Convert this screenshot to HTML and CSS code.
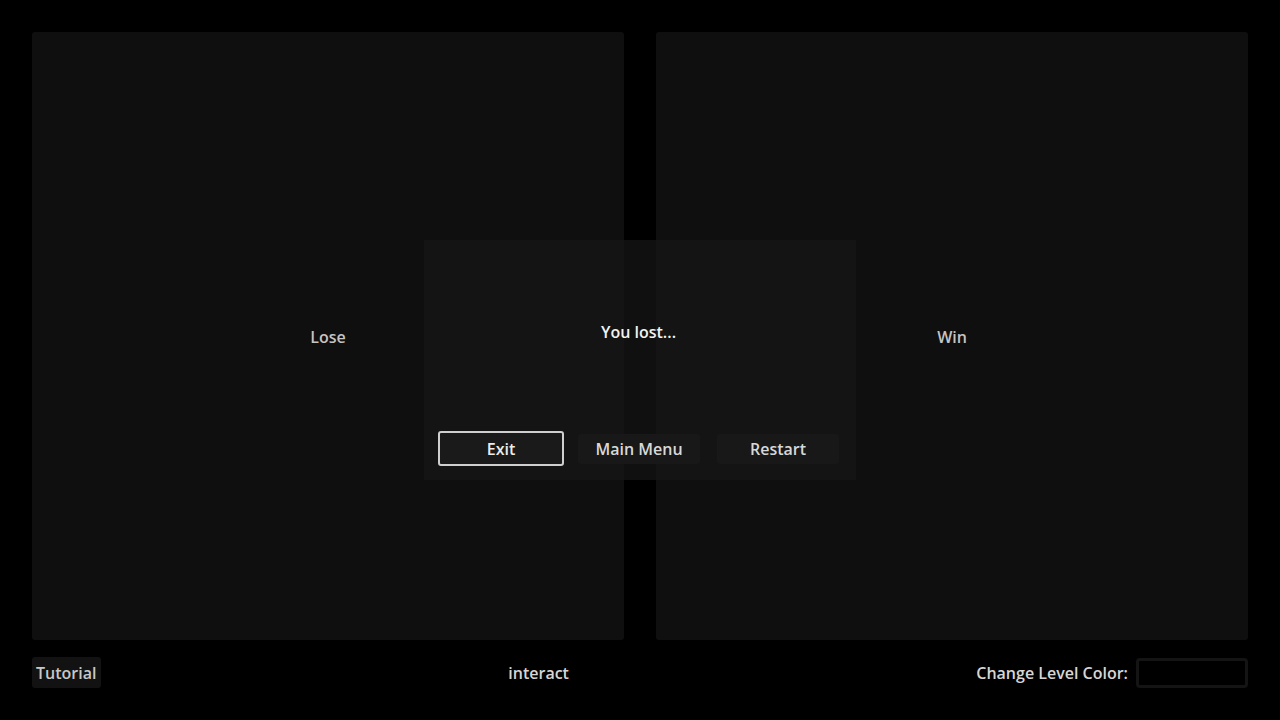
FILE: index.html
```html
<!DOCTYPE html>
<html>
<head>
<meta charset="utf-8">
<link rel="stylesheet" href="styles.css">
</head>
<body>
<div class="screen">
  <div class="panels">
    <div class="panel"><span class="panel-label">Lose</span></div>
    <div class="panel"><span class="panel-label">Win</span></div>
  </div>
  <div class="bottom">
    <div class="tutorial">Tutorial</div>
    <div class="interact">interact</div>
    <div class="color-row">
      <span class="color-label">Change Level Color:</span>
      <div class="color-btn"></div>
    </div>
  </div>
  <div class="dialog">
    <div class="dialog-msg">You lost...</div>
    <div class="dialog-btns">
      <div class="btn btn-focus">Exit</div>
      <div class="btn">Main Menu</div>
      <div class="btn">Restart</div>
    </div>
  </div>
</div>
</body>
</html>
```
FILE: styles.css
```css
html, body {
  margin: 0;
  padding: 0;
  background: #000;
  width: 1280px;
  height: 720px;
  overflow: hidden;
  font-family: "Open Sans", "Noto Sans", sans-serif;
  font-size: 16px;
  font-weight: 600;
}
.screen {
  position: relative;
  width: 1280px;
  height: 720px;
  box-sizing: border-box;
  padding: 32px 32px 0;
  display: flex;
  flex-direction: column;
}
.panels {
  display: flex;
  gap: 32px;
  height: 608px;
}
.panel {
  flex: 1;
  background: #0f0f0f;
  border-radius: 3px;
  display: flex;
  align-items: center;
  justify-content: center;
  padding-top: 2px;
  box-sizing: border-box;
}
.panel-label {
  color: #c4c4c4;
  line-height: 22px;
}
.bottom {
  margin-top: 17px;
  height: 31px;
  display: flex;
  align-items: center;
  justify-content: space-between;
  color: #d6d6d6;
}
.tutorial {
  background: #121212;
  border-radius: 3px;
  height: 31px;
  line-height: 33px;
  padding: 0 4px 0 4px;
  width: 61px;
  color: #c8c8c8;
}
.interact {
  line-height: 31px;
  padding-top: 2px;
}
.color-row {
  display: flex;
  align-items: center;
  gap: 8px;
}
.color-label {
  line-height: 31px;
  padding-top: 2px;
}
.color-btn {
  width: 112px;
  height: 30px;
  box-sizing: border-box;
  border: 3px solid #141414;
  border-radius: 4px;
  background: #000;
}
.dialog {
  position: absolute;
  left: 424px;
  top: 240px;
  width: 432px;
  height: 240px;
  box-sizing: border-box;
  background: rgba(22, 22, 22, 0.72);
  padding: 0 17px 14px 14px;
  display: flex;
  flex-direction: column;
}
.dialog-msg {
  flex: 1;
  display: flex;
  align-items: center;
  justify-content: center;
  color: #f2f2f2;
  padding-bottom: 8px;
}
.dialog-btns {
  display: flex;
  gap: 17px;
  align-items: center;
}
.btn {
  flex: 0 0 122px;
  height: 30px;
  line-height: 31px;
  text-align: center;
  background: #181818;
  color: #d8d8d8;
  border-radius: 3px;
}
.btn-focus {
  height: 35px;
  line-height: 33px;
  box-sizing: border-box;
  border: 2px solid #cfcfcf;
  background: #1a1a1a;
  color: #ececec;
  flex: 0 0 126px;
  margin-right: -3px;
}
```
